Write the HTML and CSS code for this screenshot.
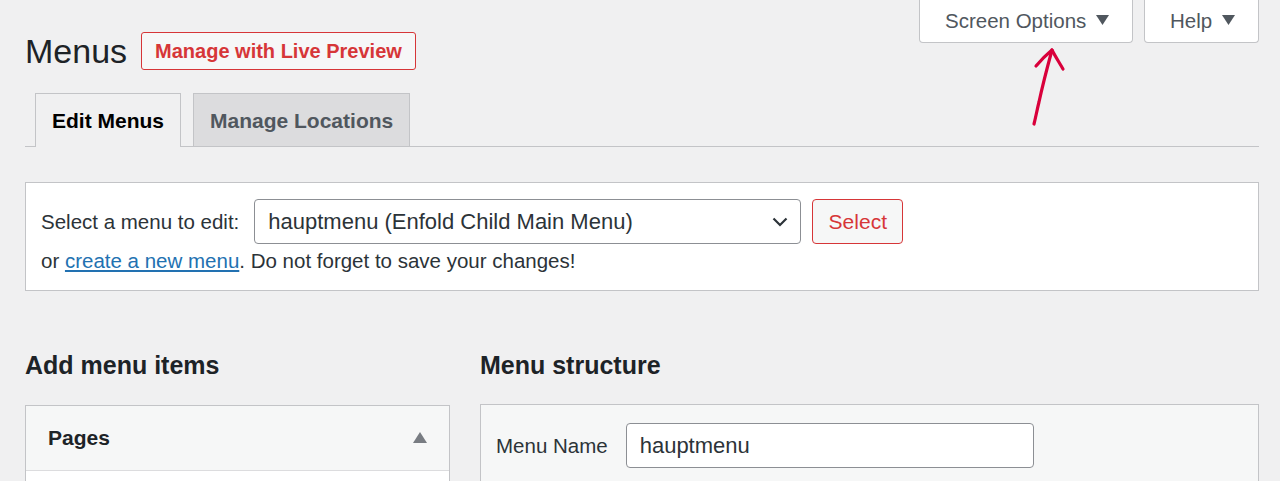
FILE: index.html
```html
<!DOCTYPE html>
<html>
<head>
<meta charset="utf-8">
<link rel="stylesheet" href="styles.css">
</head>
<body>
<div class="wrap">
  <div class="top">
    <div class="title-row">
      <h1 class="title">Menus</h1>
      <a class="btn-outline">Manage with Live Preview</a>
    </div>
    <div class="meta-links">
      <button class="meta-btn meta-screen">Screen Options <svg class="tri" width="13" height="10" viewBox="0 0 13 10"><path d="M0 0 H13 L6.5 10 Z" fill="#50575e"/></svg></button>
      <button class="meta-btn meta-help">Help <svg class="tri" width="13" height="10" viewBox="0 0 13 10"><path d="M0 0 H13 L6.5 10 Z" fill="#50575e"/></svg></button>
    </div>
  </div>
  <svg class="arrow" width="50" height="90" viewBox="0 0 50 90">
    <path d="M6 82 C8 74 9 68 11 60 C14 46 18 30 24 8" fill="none" stroke="#d9003b" stroke-width="3.2" stroke-linecap="round"/>
    <path d="M8 24 C13 18 18 13 24 8 C27 14 31 20 35 27" fill="none" stroke="#d9003b" stroke-width="3.2" stroke-linecap="round" stroke-linejoin="round"/>
  </svg>
  <nav class="tabs">
    <a class="tab tab-active">Edit Menus</a>
    <a class="tab">Manage Locations</a>
  </nav>
  <div class="panel">
    <div class="panel-row">
      <span class="label">Select a menu to edit:</span>
      <div class="select">
        <span>hauptmenu (Enfold Child Main Menu)</span>
        <svg class="chev" width="16" height="10" viewBox="0 0 16 10"><path d="M1.5 1.5 L8 8 L14.5 1.5" fill="none" stroke="#2c3338" stroke-width="2.2"/></svg>
      </div>
      <button class="btn-select">Select</button>
    </div>
    <p class="panel-note">or <a class="link">create a new menu</a>. Do not forget to save your changes!</p>
  </div>
  <div class="columns">
    <div class="col-left">
      <h2 class="h2">Add menu items</h2>
      <div class="box">
        <div class="box-head">
          <span class="box-title">Pages</span>
          <svg class="box-tri" width="14" height="11" viewBox="0 0 14 11"><path d="M0 11 H14 L7 0 Z" fill="#787c82"/></svg>
        </div>
        <div class="box-body"></div>
      </div>
    </div>
    <div class="col-right">
      <h2 class="h2">Menu structure</h2>
      <div class="structure">
        <span class="label">Menu Name</span>
        <div class="input">hauptmenu</div>
      </div>
    </div>
  </div>
</div>
</body>
</html>
```
FILE: styles.css
```css
* { box-sizing: border-box; }
html, body { margin: 0; padding: 0; }
body {
  background: #f0f0f1;
  font-family: "Liberation Sans", Arial, sans-serif;
  color: #1d2327;
  width: 1280px;
  height: 481px;
  overflow: hidden;
}
.wrap {
  position: relative;
  padding: 0 21px 0 25px;
  height: 481px;
  overflow: hidden;
}
.top {
  display: flex;
  justify-content: space-between;
  align-items: flex-start;
  height: 93px;
}
.title-row {
  display: flex;
  align-items: center;
  gap: 14px;
  margin-top: 32px;
}
.title {
  margin: 0;
  font-size: 34px;
  font-weight: 400;
  color: #1d2327;
  line-height: 38px;
}
.btn-outline {
  display: inline-block;
  height: 38px;
  line-height: 36px;
  padding: 0 13px;
  border: 1px solid #d63638;
  border-radius: 3px;
  background: #f6f7f7;
  color: #d63638;
  font-weight: 700;
  font-size: 20px;
}
.meta-links {
  display: flex;
  gap: 11px;
  margin-top: -1px;
}
.meta-btn {
  height: 44px;
  border: 1px solid #c3c4c7;
  border-top: 0;
  border-radius: 0 0 4px 4px;
  background: #fff;
  color: #50575e;
  font-family: "Liberation Sans", Arial, sans-serif;
  font-size: 20.5px;
  padding: 0 0 0 25px;
  display: flex;
  align-items: center;
  gap: 10px;
}
.meta-screen { width: 214px; }
.meta-help { width: 115px; }
.tri { display: block; margin-top: -2px; }
.arrow {
  position: absolute;
  left: 1028px;
  top: 42px;
}
.tabs {
  display: flex;
  gap: 12px;
  padding-left: 10px;
  border-bottom: 1px solid #c3c4c7;
  height: 54px;
}
.tab {
  height: 53px;
  border: 1px solid #c3c4c7;
  border-bottom: 0;
  background: #dcdcde;
  color: #50575e;
  font-weight: 700;
  font-size: 21px;
  line-height: 54px;
  padding: 0 16px;
}
.tab-active {
  background: #f0f0f1;
  color: #000;
  height: 54px;
  margin-bottom: -1px;
}
.panel {
  margin-top: 35px;
  background: #fff;
  border: 1px solid #c3c4c7;
  height: 109px;
  padding: 16px 15px 0 15px;
}
.panel-row {
  display: flex;
  align-items: center;
  gap: 11px;
}
.panel-row .label { margin-right: 4px; }
.label {
  font-size: 20.5px;
  color: #2c3338;
}
.select {
  width: 547px;
  height: 45px;
  border: 1px solid #8c8f94;
  border-radius: 4px;
  display: flex;
  align-items: center;
  justify-content: space-between;
  padding: 0 12px 0 13px;
  font-size: 22px;
  color: #2c3338;
}
.btn-select {
  width: 91px;
  height: 45px;
  border: 1px solid #d63638;
  border-radius: 4px;
  background: #f6f7f7;
  color: #d63638;
  font-family: "Liberation Sans", Arial, sans-serif;
  font-size: 21px;
}
.panel-note {
  margin: 5px 0 0;
  font-size: 20.5px;
  color: #2c3338;
  line-height: 24px;
}
.link {
  color: #2271b1;
  text-decoration: underline;
}
.columns {
  display: flex;
  gap: 30px;
  margin-top: 58px;
}
.col-left { width: 425px; }
.col-right { flex: 1; }
.h2 {
  margin: 0 0 24px;
  font-size: 25px;
  font-weight: 700;
  color: #1d2327;
  line-height: 32px;
}
.box {
  border: 1px solid #c3c4c7;
  background: #fff;
  height: 120px;
}
.box-head {
  height: 65px;
  background: #f6f7f7;
  border-bottom: 1px solid #dcdcde;
  display: flex;
  align-items: center;
  justify-content: space-between;
  padding: 0 22px 0 22px;
}
.box-title {
  font-size: 21px;
  font-weight: 700;
  color: #1d2327;
}
.box-tri { display: block; margin-top: -1px; }
.structure {
  margin-top: -1px;
  height: 120px;
  background: #f6f7f7;
  border: 1px solid #c3c4c7;
  display: flex;
  align-items: flex-start;
  gap: 18px;
  padding: 18px 15px 0 15px;
}
.structure .label { line-height: 45px; }
.input {
  width: 408px;
  height: 45px;
  border: 1px solid #8c8f94;
  border-radius: 4px;
  background: #fff;
  font-size: 22px;
  color: #2c3338;
  line-height: 43px;
  padding: 0 13px;
}
```
